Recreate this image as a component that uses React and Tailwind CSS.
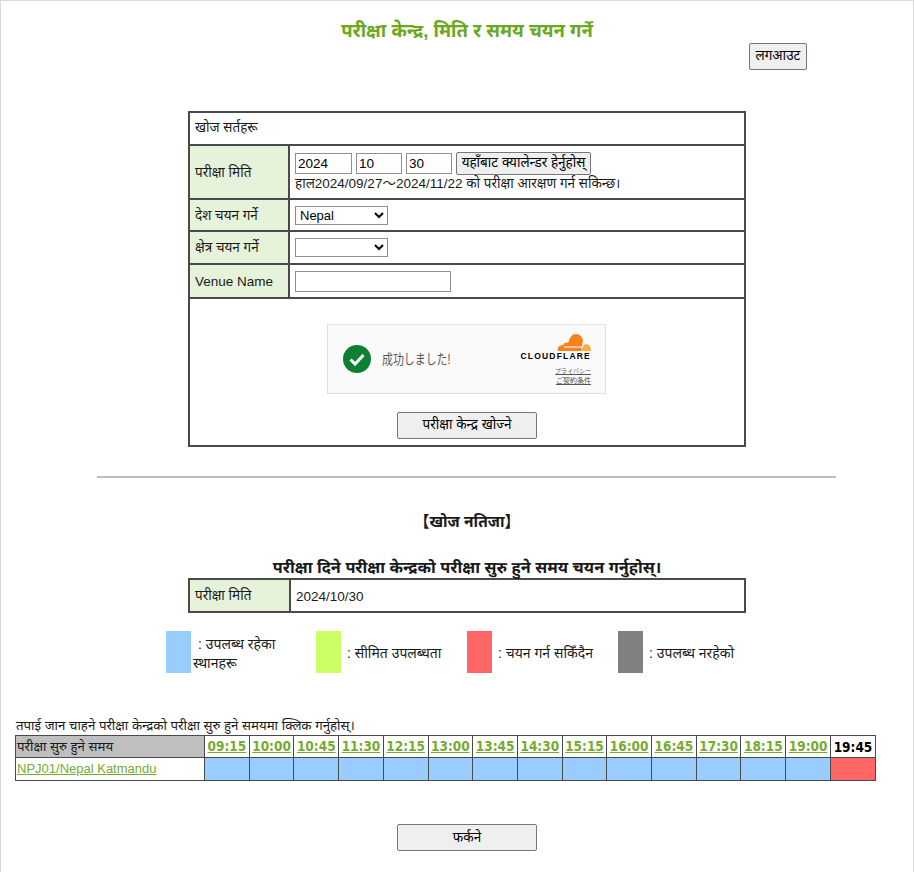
import React from 'react';

const fontStack = { fontFamily: '"Liberation Sans", "Noto Sans", "Noto Sans Devanagari", "Noto Sans CJK JP", sans-serif' };

const times = ['09:15', '10:00', '10:45', '11:30', '12:15', '13:00', '13:45', '14:30', '15:15', '16:00', '16:45', '17:30', '18:15', '19:00'];

const legend = [
  { color: 'bg-[#99ccff]', text: ': उपलब्ध रहेका स्थानहरू', box: 'w-[150px] gap-[2px]', label: 'indent-[5px]' },
  { color: 'bg-[#ccff66]', text: ': सीमित उपलब्धता', box: 'w-[151px] gap-[6px]', label: '' },
  { color: 'bg-[#ff6666]', text: ': चयन गर्न सकिँदैन', box: 'w-[151px] gap-[6px]', label: '' },
  { color: 'bg-[#808080]', text: ': उपलब्ध नरहेको', box: 'w-[150px] gap-[6px]', label: '' }
];

const labelCell = 'border-2 border-[#4a4a4a] bg-[#e6f2da] px-[5px] pt-[2px] text-left font-normal align-middle';
const valueCell = 'border-2 border-[#4a4a4a] px-[5px] align-middle';
const inputBox = 'h-[21px] border border-[#8f8f8f] bg-white px-[2px] text-[13.5px] leading-none text-black';
const selectBox = 'h-[19px] w-[93px] border border-[#8f8f8f] bg-white text-[13px] leading-none text-black';
const grayButton = 'border border-[#767676] bg-[#efefef] rounded-[2px] text-[13.5px] text-black';

const CloudflareWidget = () => (
  <div className="ml-[132px] flex h-[70px] w-[279px] items-center justify-between border border-[#e0e0e0] bg-[#fafafa] pr-[14px] pl-[15px]">
    <div className="flex items-center gap-[11px]">
      <svg width="28" height="32" viewBox="0 0 28 32">
        <circle cx="14" cy="16" r="14" fill="#0f7f31" />
        <path d="M7.500 16.500l4.500 4.500 8.500-9" fill="none" stroke="#fff" strokeWidth="3" />
      </svg>
      <span className="origin-left scale-x-[0.78] text-[14px] whitespace-nowrap text-[#595959]">成功しました!</span>
    </div>
    <div className="flex flex-col items-end">
      <svg width="34" height="18" viewBox="0 0 34 18">
        <path d="M1 18c-1-3 1-6 5-6 1-2 3-3 5-2 2-6 4-9 8-9 4 0 6 3 7 6 0 1-1 5-2 11z" fill="#f6821f" />
        <path d="M24 18c1-4 3-7 5-7 3 0 5 3 5 7z" fill="#fbad41" />
        <path d="M7 14h19" stroke="#fff" strokeWidth="1" />
      </svg>
      <span className="text-[8.5px] leading-[11px] font-bold tracking-[1.2px] whitespace-nowrap text-black">CLOUDFLARE</span>
      <span className="mt-[4px] text-[6px] leading-[10px] whitespace-nowrap text-[#555] underline">プライバシー</span>
      <span className="text-[7px] leading-[10px] whitespace-nowrap text-[#555] underline">ご契約条件</span>
    </div>
  </div>
);

const App = () => {
  return (
    <div className="relative h-[872px] w-[914px] overflow-hidden border-x border-t border-[#d9d9d9] bg-white text-[13.5px] text-[#1a1a1a]" style={fontStack}>
      <h1 className="ml-[187px] w-[558px] pt-[16px] text-center text-[18.5px] leading-[28px] font-bold text-[#6aa820]">
        परीक्षा केन्द्र, मिति र समय चयन गर्ने
      </h1>

      <div className="mt-[-2px] flex justify-end pr-[106px]">
        <button className={`${grayButton} h-[27px] w-[58px]`}>लगआउट</button>
      </div>

      {/* Search form */}
      <table className="mt-[41px] ml-[187px] w-[558px] border-collapse border-2 border-[#4a4a4a]">
        <tbody>
          <tr className="h-[33px]">
            <td colSpan={2} className={valueCell}>खोज सर्तहरू</td>
          </tr>
          <tr className="h-[54px]">
            <th className={`${labelCell} w-[100px]`}>परीक्षा मिति</th>
            <td className={valueCell}>
              <div className="flex items-center gap-[4px]">
                <input readOnly value="2024" className={`${inputBox} w-[57px]`} />
                <input readOnly value="10" className={`${inputBox} w-[46px]`} />
                <input readOnly value="30" className={`${inputBox} w-[46px]`} />
                <button className={`${grayButton} h-[23px] w-[135px] whitespace-nowrap`}>यहाँबाट क्यालेन्डर हेर्नुहोस्</button>
              </div>
              <div className="leading-[18px]">हाल2024/09/27～2024/11/22 को परीक्षा आरक्षण गर्न सकिन्छ।</div>
            </td>
          </tr>
          <tr className="h-[32px]">
            <th className={labelCell}>देश चयन गर्ने</th>
            <td className={`${valueCell} pt-[2px]`}>
              <select className={selectBox} defaultValue="Nepal">
                <option>Nepal</option>
              </select>
            </td>
          </tr>
          <tr className="h-[33px]">
            <th className={labelCell}>क्षेत्र चयन गर्ने</th>
            <td className={`${valueCell} pt-[2px]`}>
              <select className={selectBox}>
                <option></option>
              </select>
            </td>
          </tr>
          <tr className="h-[34px]">
            <th className={labelCell}>Venue Name</th>
            <td className={`${valueCell} pt-[2px]`}>
              <input readOnly className={`${inputBox} w-[156px]`} />
            </td>
          </tr>
          <tr className="h-[147px]">
            <td colSpan={2} className="border-2 border-[#4a4a4a] px-[5px] pt-[25px] pb-[6px] text-center align-top">
              <CloudflareWidget />
              <button className={`${grayButton} mt-[18px] h-[27px] w-[140px]`}>परीक्षा केन्द्र खोज्ने</button>
            </td>
          </tr>
        </tbody>
      </table>

      <hr className="mt-[29px] ml-[96px] w-[739px] border-t-2 border-[#bdbdbd]" />

      <div className="mt-[33px] ml-[187px] w-[558px] text-center text-[15.5px] leading-[22px] font-bold">【खोज नतिजा】</div>
      <div className="mt-[23px] ml-[187px] w-[558px] text-center text-[16.25px] leading-[22px] font-bold whitespace-nowrap">परीक्षा दिने परीक्षा केन्द्रको परीक्षा सुरु हुने समय चयन गर्नुहोस्।</div>

      <table className="ml-[187px] w-[558px] border-collapse border-2 border-[#4a4a4a]">
        <tbody>
          <tr className="h-[33px]">
            <th className={`${labelCell} w-[101px]`}>परीक्षा मिति</th>
            <td className={`${valueCell} pt-[3px]`}>2024/10/30</td>
          </tr>
        </tbody>
      </table>

      {/* Legend */}
      <div className="mt-[18px] ml-[165px] flex text-[14px]">
        {legend.map((item) => (
          <div key={item.color} className={`${item.box} flex items-center`}>
            <div className={`${item.color} h-[42px] w-[25px] shrink-0`} />
            <span className={`${item.label} pt-[3px] leading-[19px]`}>{item.text}</span>
          </div>
        ))}
      </div>

      <p className="mt-[43px] ml-[15px] text-[13.25px] leading-[19px]">तपाई जान चाहने परीक्षा केन्द्रको परीक्षा सुरु हुने समयमा क्लिक गर्नुहोस्।</p>

      {/* Time slots */}
      <table className="ml-[14px] w-[861px] table-fixed border-collapse border border-[#4a4a4a]">
        <tbody>
          <tr className="h-[22px]">
            <th className="w-[189px] border border-[#4a4a4a] bg-[#bfbfbf] px-[1px] text-left text-[13.25px] font-normal">परीक्षा सुरु हुने समय</th>
            {times.map((time) => (
              <th key={time} className="border border-[#4a4a4a] p-0">
                <a href="#" className="font-['DejaVu_Sans_Condensed'] text-[13.5px] font-bold text-[#76ac2e] underline">{time}</a>
              </th>
            ))}
            <th className="w-[45px] border border-[#4a4a4a] p-0 font-['DejaVu_Sans_Condensed'] text-[13.5px] font-bold text-black">19:45</th>
          </tr>
          <tr className="h-[23px]">
            <td className="border border-[#4a4a4a] px-[1px]">
              <a href="#" className="text-[13px] whitespace-nowrap text-[#76ac2e] underline">NPJ01/Nepal Katmandu</a>
            </td>
            {times.map((time) => (
              <td key={time} className="border border-[#4a4a4a] bg-[#99ccff]" />
            ))}
            <td className="border border-[#4a4a4a] bg-[#ff6666]" />
          </tr>
        </tbody>
      </table>

      <div className="mt-[43px] ml-[187px] flex w-[558px] justify-center">
        <button className={`${grayButton} h-[27px] w-[140px]`}>फर्कने</button>
      </div>
    </div>
  );
};

export default App;
